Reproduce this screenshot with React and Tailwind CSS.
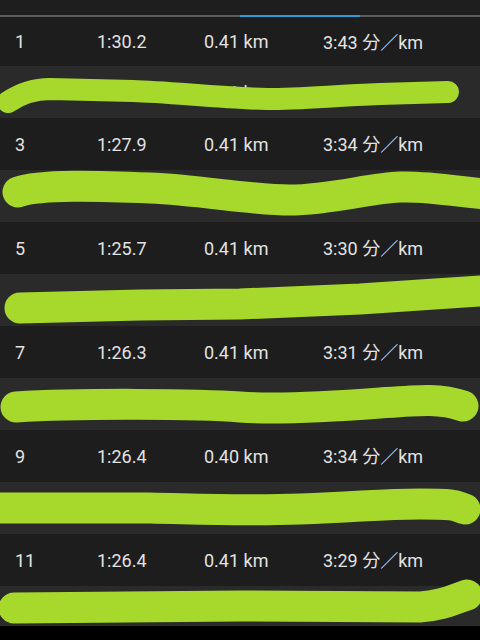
import React from "react";

const rows = [
  { n: "1", t: "1:30.2", d: "0.41 km", p: "3:43" },
  { n: "2", t: "1:31.6", d: "0.31 km", p: "4:55" },
  { n: "3", t: "1:27.9", d: "0.41 km", p: "3:34" },
  { n: "4", t: "", d: "", p: "" },
  { n: "5", t: "1:25.7", d: "0.41 km", p: "3:30" },
  { n: "6", t: "", d: "", p: "" },
  { n: "7", t: "1:26.3", d: "0.41 km", p: "3:31" },
  { n: "8", t: "", d: "", p: "" },
  { n: "9", t: "1:26.4", d: "0.40 km", p: "3:34" },
  { n: "10", t: "", d: "", p: "" },
  { n: "11", t: "1:26.4", d: "0.41 km", p: "3:29" },
  { n: "12", t: "", d: "", p: "" },
];

// highlighter strokes drawn over the even rows (row-local coords)
const scribbles = {
  1: { d: "M 8 36 C 20 28, 35 23, 50 23 L 133 25 C 170 26, 220 32, 267 33 C 300 33, 330 30, 380 28 L 448 26", w: 22 },
  3: { d: "M 18 22 C 40 14, 100 16, 150 18 S 250 30, 290 30 S 370 18, 400 17 S 460 22, 495 25", w: 31 },
  5: { d: "M 20 34 L 140 31 L 240 30 L 360 25 L 495 16", w: 31 },
  7: { d: "M 16 29 C 80 25, 200 26, 240 29 S 340 28, 380 25 S 440 20, 463 28", w: 31 },
  9: { d: "M -5 26 L 150 26 C 200 27, 240 29, 300 27 S 380 22, 420 22 S 455 24, 465 27", w: 31 },
  11: { d: "M 14 22 L 240 20 L 420 21 C 440 20, 452 14, 467 9", w: 31 },
};

const Row = ({ r, i }) => {
  const even = i % 2 === 1;
  const h = i === 0 ? "h-[49px]" : i === 11 ? "h-[40px]" : "h-[52px]";
  const s = scribbles[i];
  const hasText = r.t !== "";
  return (
    <div className={`relative flex items-center ${h} ${even ? "bg-[#2a2a2a]" : "bg-[#1d1d1d]"} text-[18px] text-[#e2e2e2]`}>
      {hasText && (
        <>
          <div className="w-[97px] pl-[15px]">{r.n}</div>
          <div className="w-[107px]">{r.t}</div>
          <div className="w-[119px]">{r.d}</div>
          <div>
            {r.p} <span style={{ fontFamily: '"Noto Sans CJK JP", sans-serif' }}>分／</span>km
          </div>
        </>
      )}
      {s && (
        <svg className="absolute left-0 top-0 overflow-visible" width="480" height="52" viewBox="0 0 480 52">
          <path d={s.d} fill="none" stroke="#a6d92b" strokeWidth={s.w} strokeLinecap="round" strokeLinejoin="round" />
        </svg>
      )}
    </div>
  );
};

export default function App() {
  return (
    <div className="w-[480px] h-[640px] bg-black overflow-hidden" style={{ fontFamily: "Roboto, sans-serif" }}>
      <div className="h-[15px] bg-[#1e1e1e]" />
      <div className="h-[2px] bg-[#5c5c5c] flex">
        <div className="ml-[240px] w-[120px] h-full bg-[#2f9bd6]" />
      </div>
      {rows.map((r, i) => (
        <Row key={r.n} r={r} i={i} />
      ))}
    </div>
  );
}
